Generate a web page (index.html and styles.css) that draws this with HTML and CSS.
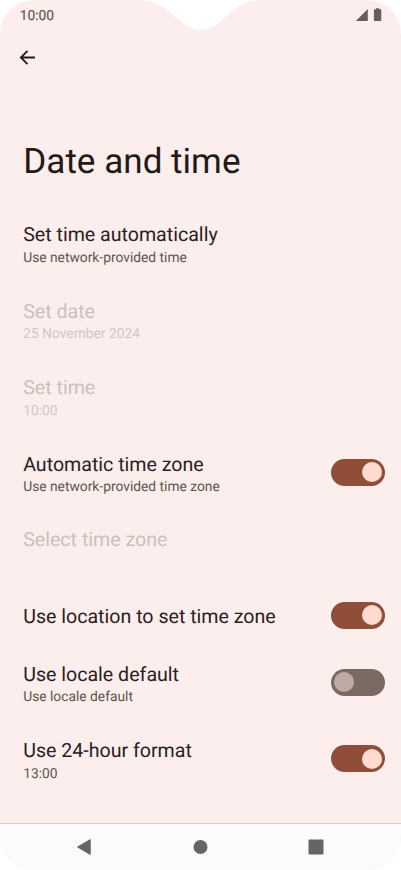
FILE: index.html
```html
<!DOCTYPE html>
<html lang="en">
<head>
<meta charset="utf-8">
<meta name="viewport" content="width=device-width, initial-scale=1">
<title>Date and time</title>
<link rel="stylesheet" href="styles.css">
</head>
<body>
<div class="phone">
  <svg class="notch" width="140" height="31" viewBox="0 0 140 31"><path d="M12 0C26 1.500 35 7 43.500 15S60 30 70.700 30S90 23 98 15S114 1.500 129 0Z"/></svg>
  <div class="status">
    <span class="clock">10:00</span>
    <svg width="28" height="14" viewBox="0 0 28 14"><path d="M12.800 1V13H.8ZM19.500 1.300h1.500V.3h3.200v1h1.500q.6 0 .6.700v10.300q0 .7-.7.700h-6q-.7 0-.7-.7V2q0-.7.600-.7Z"/></svg>
  </div>
  <div class="toolbar">
    <svg class="back" width="18" height="18" viewBox="0 0 18 18"><path d="M17 8.500H3M9.500 1.800L2.800 8.500l6.700 6.700"/></svg>
  </div>
  <h1>Date and time</h1>
  <main>
    <div class="row"><div><div class="title">Set time automatically</div><div class="sub">Use network-provided time</div></div></div>
    <div class="row disabled"><div><div class="title">Set date</div><div class="sub">25 November 2024</div></div></div>
    <div class="row disabled"><div><div class="title">Set time</div><div class="sub">10:00</div></div></div>
    <div class="row"><div><div class="title">Automatic time zone</div><div class="sub">Use network-provided time zone</div></div><span class="switch on"></span></div>
    <div class="row disabled blank-sub"><div><div class="title">Select time zone</div></div></div>
    <div class="row single"><div><div class="title">Use location to set time zone</div></div><span class="switch on"></span></div>
    <div class="row"><div><div class="title">Use locale default</div><div class="sub">Use locale default</div></div><span class="switch"></span></div>
    <div class="row"><div><div class="title">Use 24-hour format</div><div class="sub">13:00</div></div><span class="switch on"></span></div>
  </main>
  <nav>
    <svg width="16" height="18" viewBox="0 0 16 18"><path d="M14.200 1.600v14.800L1.600 9Z" stroke="#666465" stroke-width="1" stroke-linejoin="round"/></svg>
    <svg width="16" height="16" viewBox="0 0 16 16"><circle cx="8.500" cy="8" r="7"/></svg>
    <svg width="16" height="16" viewBox="0 0 16 16"><rect x=".5" y=".5" width="15" height="15" rx="1.200"/></svg>
  </nav>
</div>
</body>
</html>
```
FILE: styles.css
```css
* { box-sizing: border-box; }
body { margin: 0; background: #fff; font-family: Roboto, sans-serif; color: #2a201e; text-rendering: geometricPrecision; }
.phone { position: relative; width: 401px; height: 870px; background: #fceeec; border-radius: 34px; overflow: hidden; display: flex; flex-direction: column; }
.notch { position: absolute; left: 130px; top: 0; fill: #fff; }
.status { height: 32px; padding: 8px 18px 0 19.700px; display: flex; justify-content: space-between; align-items: flex-start; flex: none; }
.status svg { fill: #665e5d; }
.clock { font-size: 13.800px; line-height: 16px; color: #615857; -webkit-text-stroke: .2px #615857; }
.toolbar { height: 51px; padding: 17px 18px 0; flex: none; }
.back { display: block; fill: none; stroke: #231a18; stroke-width: 1.800; }
h1 { margin: 55px 0 0 23.300px; height: 66.700px; font-size: 35.100px; line-height: 47px; font-weight: 400; color: #231a18; flex: none; }
main { flex: 1; }
.row { height: 76.400px; padding: 0 16px 0 23.200px; display: flex; align-items: center; justify-content: space-between; }
.title { font-size: 19.600px; line-height: 25px; white-space: nowrap; }
.sub { font-size: 13.800px; line-height: 18px; padding-top: 1.400px; margin-bottom: -3.300px; color: #62534f; white-space: nowrap; }
.disabled .title { color: #cdbfbd; }
.disabled .sub { color: #d4c6c4; }
.single { height: 57.500px; }
.single .title { padding-top: 1.500px; }
.blank-sub { padding-bottom: 17px; }
.switch { width: 54.500px; height: 27px; border-radius: 14px; background: #7b6a64; padding: 3.500px; display: flex; flex: none; }
.switch::before { content: ""; width: 20px; height: 20px; border-radius: 50%; background: #bfaaa3; }
.switch.on { background: #904d38; justify-content: flex-end; }
.switch.on::before { background: #ffdbd0; }
nav { height: 47px; background: #fcfafb; border-top: 1px solid #d8d0d0; padding: 0 77px 0 76px; display: flex; justify-content: space-between; align-items: center; fill: #666465; flex: none; }
```
